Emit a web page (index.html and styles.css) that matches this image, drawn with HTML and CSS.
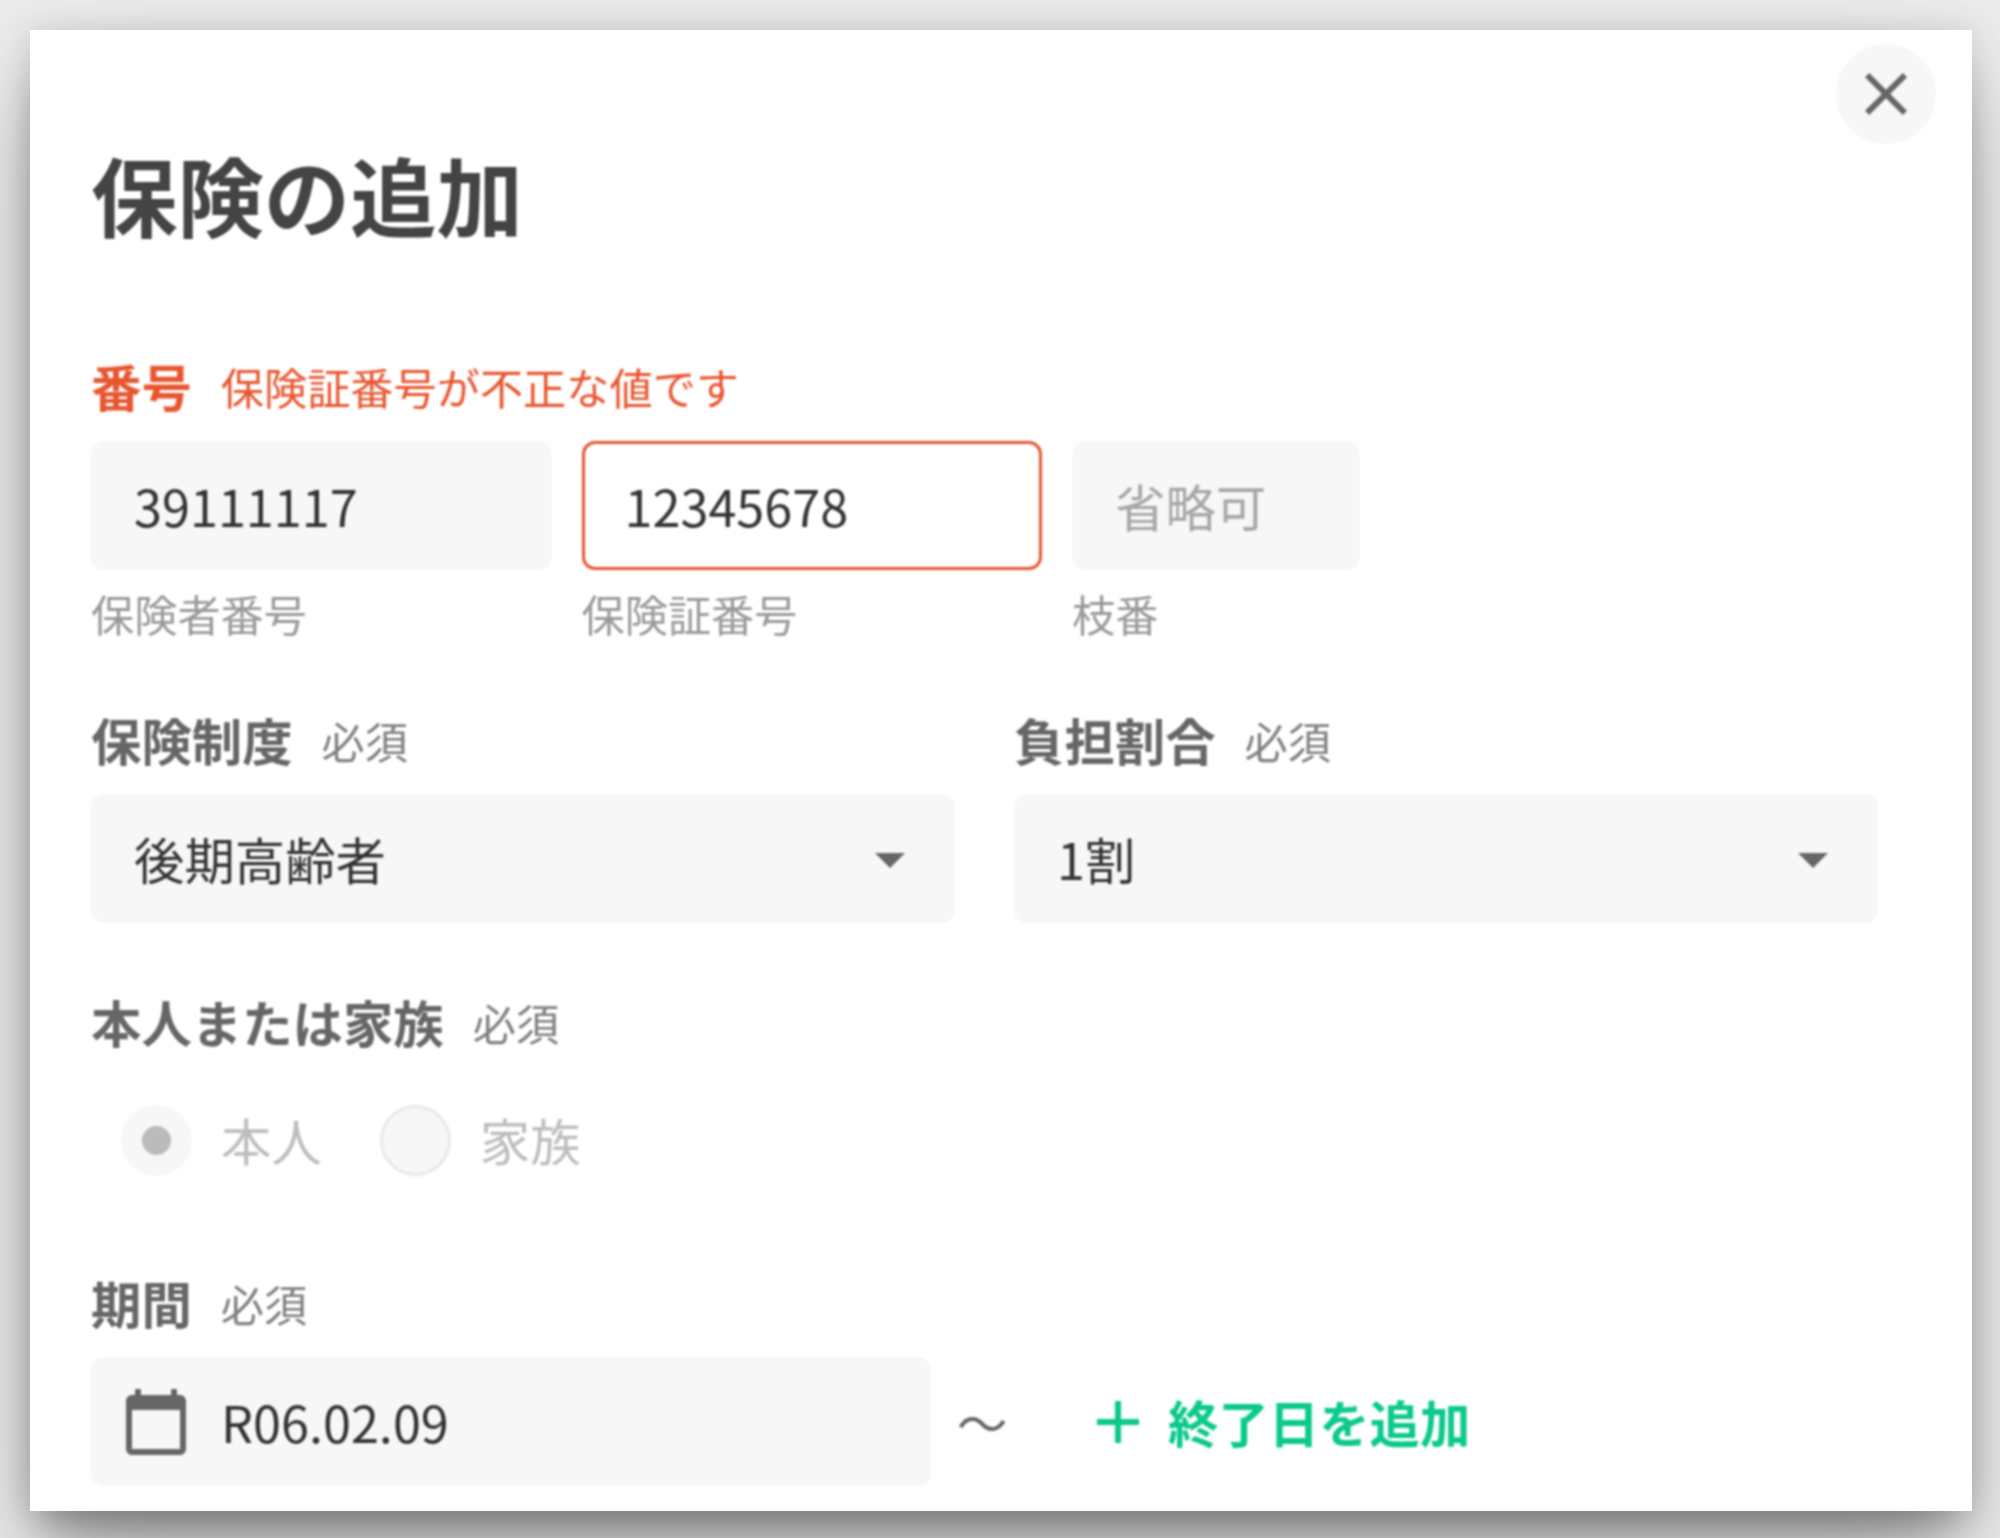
FILE: index.html
```html
<!DOCTYPE html>
<html lang="ja">
<head>
    <meta charset="UTF-8">
    <title>保険の追加</title>
    <link rel="stylesheet" href="styles.css">
</head>
<body>
    <div class="dialog">
        <div class="dialog-inner">
            <button class="close-btn" aria-label="閉じる">
                <svg class="icon" viewBox="0 0 24 24"><path d="M19 6.41 17.59 5 12 10.59 6.41 5 5 6.41 10.59 12 5 17.59 6.41 19 12 13.41 17.59 19 19 17.59 13.41 12z"/></svg>
            </button>

            <h1 class="title">保険の追加</h1>

            <div class="label-row error first">
                <span class="label">番号</span>
                <span class="hint">保険証番号が不正な値です</span>
            </div>
            <div class="number-row">
                <div class="number-col wide">
                    <div class="field">39111117</div>
                    <div class="sub-label">保険者番号</div>
                </div>
                <div class="number-col wide">
                    <div class="field invalid">12345678</div>
                    <div class="sub-label">保険証番号</div>
                </div>
                <div class="number-col narrow">
                    <div class="field placeholder">省略可</div>
                    <div class="sub-label">枝番</div>
                </div>
            </div>

            <div class="select-row">
                <div class="select-col">
                    <div class="label-row">
                        <span class="label">保険制度</span>
                        <span class="required">必須</span>
                    </div>
                    <div class="field select">
                        <span>後期高齢者</span>
                        <svg class="icon caret" viewBox="0 0 24 24"><path d="M7 10l5 5 5-5z"/></svg>
                    </div>
                </div>
                <div class="select-col">
                    <div class="label-row">
                        <span class="label">負担割合</span>
                        <span class="required">必須</span>
                    </div>
                    <div class="field select">
                        <span>1割</span>
                        <svg class="icon caret" viewBox="0 0 24 24"><path d="M7 10l5 5 5-5z"/></svg>
                    </div>
                </div>
            </div>

            <div class="label-row family">
                <span class="label">本人または家族</span>
                <span class="required">必須</span>
            </div>
            <div class="radio-row">
                <div class="radio checked"></div>
                <span class="radio-text">本人</span>
                <div class="radio"></div>
                <span class="radio-text">家族</span>
            </div>

            <div class="label-row period">
                <span class="label">期間</span>
                <span class="required">必須</span>
            </div>
            <div class="date-row">
                <div class="field date">
                    <svg class="icon calendar" viewBox="0 0 24 24"><path d="M20 3h-1V1h-2v2H7V1H5v2H4c-1.1 0-2 .9-2 2v16c0 1.1.9 2 2 2h16c1.1 0 2-.9 2-2V5c0-1.1-.9-2-2-2zm0 18H4V8h16v13z"/></svg>
                    <span>R06.02.09</span>
                </div>
                <span class="tilde">〜</span>
                <div class="add-end">
                    <svg class="icon" viewBox="0 0 24 24"><path d="M19 13h-6v6h-2v-6H5v-2h6V5h2v6h6v2z"/></svg>
                    <span>終了日を追加</span>
                </div>
            </div>
        </div>
    </div>
</body>
</html>
```

FILE: styles.css
```css
* { box-sizing: border-box; }
html, body { height: 100%; }
body {
    margin: 0;
    padding: 30px 28px 27px 30px;
    overflow: hidden;
    background: #ececec;
    font-family: "Noto Sans CJK JP", "Noto Sans", sans-serif;
    font-size: 50.4px;
    color: #333;
}
.dialog {
    height: 100%;
    background: #fff;
    box-shadow: 0 30px 34px -12px rgba(0,0,0,0.14), -4px 40px 60px -20px rgba(0,0,0,0.28), -4px 60px 120px 0 rgba(0,0,0,0.17), 0 0 30px rgba(0,0,0,0.12);
}
.dialog-inner {
    position: relative;
    height: 100%;
    padding: 114px 94px 0 61px;
    filter: blur(1.2px);
}
.icon { width: 72px; height: 72px; fill: currentColor; flex: none; display: block; }

.close-btn {
    position: absolute;
    top: 14px;
    right: 36px;
    width: 100px;
    height: 100px;
    padding: 0;
    border: none;
    border-radius: 50%;
    background: #f7f7f7;
    color: #666;
    display: flex;
    align-items: center;
    justify-content: center;
}
.title {
    margin: 0;
    font-size: 86.4px;
    line-height: 100px;
    font-weight: 700;
    color: #444;
}

.label-row {
    display: flex;
    align-items: center;
    gap: 29px;
    height: 60px;
    margin-bottom: 24px;
    color: #666;
}
.label { font-weight: 700; line-height: 54px; }
.required { font-size: 43.2px; color: #808080; line-height: 54px; }
.hint { font-size: 43.2px; line-height: 54px; }
.error { color: #e8552f; }
.first { margin-top: 112px; margin-bottom: 25px; }
.family { margin-top: 69px; margin-bottom: 53px; }
.period { margin-top: 98px; }

.field {
    height: 129px;
    padding: 0 43px;
    display: flex;
    align-items: center;
    background: #f7f7f7;
    border-radius: 13px;
    line-height: 60px;
}
.invalid { background: #fff; border: 3px solid #e8552f; padding: 0 40px; }
.placeholder { color: #a6a6a6; }

.number-row { display: flex; gap: 30px; }
.number-col.wide { width: 460.5px; }
.number-col.narrow { width: 288px; }
.sub-label {
    margin-top: 13px;
    font-size: 43.2px;
    line-height: 60px;
    color: #999;
}

.select-row {
    display: grid;
    grid-template-columns: 864px 864px;
    gap: 59px;
    margin-top: 67px;
}
.select { justify-content: space-between; padding-right: 29px; }
.caret { color: #666; }

.radio-row { display: flex; align-items: center; height: 70px; padding-left: 30px; }
.radio {
    width: 71px;
    height: 71px;
    border-radius: 50%;
    background: #f7f7f7;
    border: 3px solid #e8e8e8;
    display: flex;
    align-items: center;
    justify-content: center;
}
.radio.checked { border-color: #f7f7f7; }
.radio.checked::after {
    content: "";
    width: 29px;
    height: 29px;
    border-radius: 50%;
    background: #bbb;
}
.radio-text { margin: 0 58px 0 29px; color: #bdbdbd; line-height: 60px; }

.date-row { display: flex; align-items: center; }
.date { width: 840px; padding-left: 29px; gap: 29px; }
.calendar { color: #666; }
.tilde { margin-left: 26px; width: 50px; color: #666; line-height: 60px; }
.add-end {
    margin-left: 75px;
    display: flex;
    align-items: center;
    gap: 14px;
    color: #0bc98c;
    font-weight: 700;
    line-height: 60px;
}
```
